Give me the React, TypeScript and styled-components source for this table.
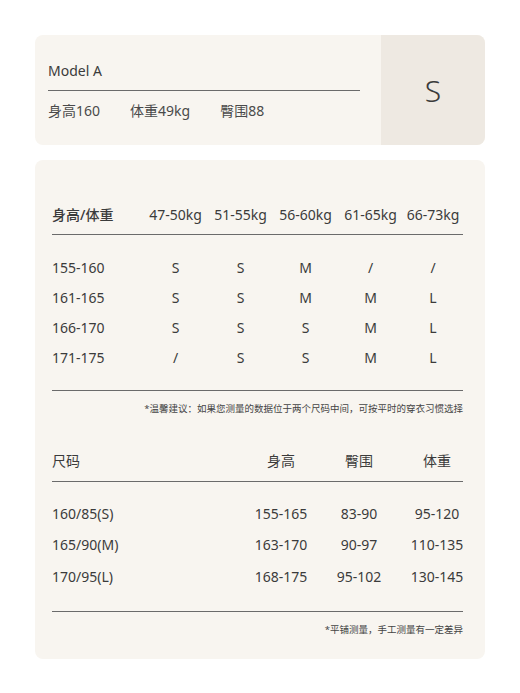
import React from "react";
import styled, {createGlobalStyle} from "styled-components";

const weightCols = ["47-50kg", "51-55kg", "56-60kg", "61-65kg", "66-73kg"];
const fitRows = [
    {height: "155-160", sizes: ["S", "S", "M", "/", "/"]},
    {height: "161-165", sizes: ["S", "S", "M", "M", "L"]},
    {height: "166-170", sizes: ["S", "S", "S", "M", "L"]},
    {height: "171-175", sizes: ["/", "S", "S", "M", "L"]},
];
const sizeRows = [
    {size: "160/85(S)", height: "155-165", hip: "83-90", weight: "95-120"},
    {size: "165/90(M)", height: "163-170", hip: "90-97", weight: "110-135"},
    {size: "170/95(L)", height: "168-175", hip: "95-102", weight: "130-145"},
];

export default function App() {
    return (
        <>
            <GlobalStyle/>
            <Page>
                <ModelCard>
                    <ModelInfo>
                        <ModelName>Model A</ModelName>
                        <Stats>
                            <span>身高160</span>
                            <span>体重49kg</span>
                            <span>臀围88</span>
                        </Stats>
                    </ModelInfo>
                    <SizeBox>S</SizeBox>
                </ModelCard>

                <TableCard>
                    <FitGrid $head>
                        <HeadCell $left $bold>身高/体重</HeadCell>
                        {weightCols.map(w => <HeadCell key={w}>{w}</HeadCell>)}
                    </FitGrid>
                    <Body $top={18} $bottom={17}>
                        {fitRows.map(r => (
                            <FitGrid key={r.height}>
                                <Cell $left>{r.height}</Cell>
                                {r.sizes.map((s, i) => <Cell key={i}>{s}</Cell>)}
                            </FitGrid>
                        ))}
                    </Body>
                    <Note>*温馨建议：如果您测量的数据位于两个尺码中间，可按平时的穿衣习惯选择</Note>

                    <SizeGrid $head $gapTop>
                        <HeadCell $left>尺码</HeadCell>
                        <HeadCell>身高</HeadCell>
                        <HeadCell>臀围</HeadCell>
                        <HeadCell>体重</HeadCell>
                    </SizeGrid>
                    <Body $top={16} $bottom={18}>
                        {sizeRows.map(r => (
                            <SizeGrid key={r.size}>
                                <Cell $left>{r.size}</Cell>
                                <Cell>{r.height}</Cell>
                                <Cell>{r.hip}</Cell>
                                <Cell>{r.weight}</Cell>
                            </SizeGrid>
                        ))}
                    </Body>
                    <Note>*平铺测量，手工测量有一定差异</Note>
                </TableCard>
            </Page>
        </>
    );
}

const GlobalStyle = createGlobalStyle`
  body {
    margin: 0;
    background: #ffffff;
    font-family: "Noto Sans", "Noto Sans CJK SC", sans-serif;
    color: #3b3b3b;
  }
`
const Page = styled.div`
  display: flex;
  flex-direction: column;
  gap: 15px;
  padding: 35px;
  width: 450px;
`
const ModelCard = styled.div`
  display: flex;
  height: 110px;
  background: #f8f5f0;
  border-radius: 8px;
  overflow: hidden;
`
const ModelInfo = styled.div`
  flex: 1;
  padding: 26px 21px 0 13px;
  display: flex;
  flex-direction: column;
`
const ModelName = styled.div`
  font-size: 14px;
  line-height: 20px;
  padding-bottom: 9px;
  border-bottom: 1px solid #6b6b6b;
`
const Stats = styled.div`
  display: flex;
  gap: 30px;
  margin-top: 10px;
  font-size: 14px;
  line-height: 20px;
  color: #4a4a4a;
`
const SizeBox = styled.div`
  width: 104px;
  display: flex;
  align-items: center;
  justify-content: center;
  background: #eee9e2;
  font-size: 30px;
  font-weight: 300;
  color: #3b3b3b;
`
const TableCard = styled.div`
  background: #f8f5f0;
  border-radius: 8px;
  padding: 45px 22px 22px 17px;
  display: flex;
  flex-direction: column;
`
const FitGrid = styled.div<{ $head?: boolean }>`
  display: grid;
  grid-template-columns: 91px repeat(4, 65px) 60px;
  height: ${p => p.$head ? "20px" : "30px"};
  align-items: center;
  ${p => p.$head && `
    padding-bottom: 9px;
    border-bottom: 1px solid #6b6b6b;
  `}
`
const SizeGrid = styled.div<{ $head?: boolean; $gapTop?: boolean }>`
  display: grid;
  grid-template-columns: 1fr 52px 52px 52px;
  column-gap: 26px;
  height: ${p => p.$head ? "20px" : "31.5px"};
  align-items: center;
  margin-top: ${p => p.$gapTop ? "35px" : "0"};
  ${p => p.$head && `
    padding-bottom: 10px;
    border-bottom: 1px solid #6b6b6b;
  `}
`
const HeadCell = styled.div<{ $left?: boolean; $bold?: boolean }>`
  display: flex;
  justify-content: ${p => p.$left ? "flex-start" : "center"};
  white-space: nowrap;
  font-size: 14px;
  line-height: 20px;
  font-weight: ${p => p.$bold ? 500 : 400};
`
const Cell = styled.div<{ $left?: boolean }>`
  display: flex;
  justify-content: ${p => p.$left ? "flex-start" : "center"};
  white-space: nowrap;
  font-size: 14px;
  line-height: 20px;
`
const Body = styled.div<{ $top: number; $bottom: number }>`
  display: flex;
  flex-direction: column;
  padding-top: ${p => p.$top}px;
  padding-bottom: ${p => p.$bottom}px;
  border-bottom: 1px solid #6b6b6b;
`
const Note = styled.div`
  margin-top: 11px;
  text-align: right;
  font-size: 9.5px;
  line-height: 14px;
  color: #444;
`
